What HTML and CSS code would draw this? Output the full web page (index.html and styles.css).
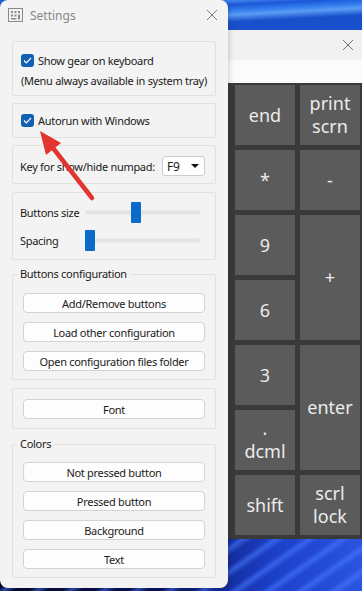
FILE: index.html
```html
<!DOCTYPE html>
<html lang="en">
<head>
    <meta charset="UTF-8">
    <meta name="viewport" content="width=device-width, initial-scale=1.0">
    <title>Settings</title>
    <link rel="stylesheet" href="styles.css">
</head>
<body>
    <div class="desktop">
        <div class="numpad-window">
            <div class="np-titlebar">
                <svg class="np-close" width="12" height="12" viewBox="0 0 12 12"><path d="M1 1L11 11M11 1L1 11" stroke="#707070" stroke-width="1"/></svg>
            </div>
            <div class="np-strip"></div>
            <div class="keypad">
                <div class="key">end</div>
                <div class="key">print<br>scrn</div>
                <div class="key">*</div>
                <div class="key">-</div>
                <div class="key">9</div>
                <div class="key tall">+</div>
                <div class="key">6</div>
                <div class="key">3</div>
                <div class="key tall">enter</div>
                <div class="key">.<br>dcml</div>
                <div class="key">shift</div>
                <div class="key">scrl<br>lock</div>
            </div>
        </div>

        <div class="settings-window">
            <div class="titlebar">
                <svg class="app-icon" width="15" height="14" viewBox="0 0 15 14">
                    <rect x="0.5" y="0.5" width="14" height="13" fill="none" stroke="#8a8a8a"/>
                    <rect x="3" y="3" width="2" height="2" fill="#8a8a8a"/>
                    <rect x="6.5" y="3" width="2" height="2" fill="#8a8a8a"/>
                    <rect x="10" y="3" width="2" height="2" fill="#8a8a8a"/>
                    <rect x="3" y="6.5" width="2" height="2" fill="#8a8a8a"/>
                    <rect x="6.5" y="6.5" width="2" height="2" fill="#8a8a8a"/>
                    <rect x="10" y="6.5" width="2" height="5" fill="#8a8a8a"/>
                    <rect x="3" y="10" width="5.5" height="1.5" fill="#8a8a8a"/>
                </svg>
                <span class="title">Settings</span>
                <svg class="close" width="12" height="12" viewBox="0 0 12 12"><path d="M1 1L11 11M11 1L1 11" stroke="#7a7a7a" stroke-width="1"/></svg>
            </div>

            <div class="content">
                <div class="box box-gear">
                    <label class="check-row"><span class="checkbox"><svg width="9" height="7" viewBox="0 0 9 7"><path d="M1 3.5L3.3 5.8L8 1" fill="none" stroke="#fff" stroke-width="1.2"/></svg></span>Show gear on keyboard</label>
                    <div class="note">(Menu always available in system tray)</div>
                </div>

                <div class="box box-autorun">
                    <label class="check-row"><span class="checkbox"><svg width="9" height="7" viewBox="0 0 9 7"><path d="M1 3.5L3.3 5.8L8 1" fill="none" stroke="#fff" stroke-width="1.2"/></svg></span>Autorun with Windows</label>
                </div>

                <div class="box box-key">
                    <span>Key for show/hide numpad:</span>
                    <div class="select"><span>F9</span><span class="caret"></span></div>
                </div>

                <div class="box box-sliders">
                    <div class="slider-row">
                        <span class="slider-label">Buttons size</span>
                        <div class="slider"><div class="track"></div><div class="thumb" style="left: 46px"></div></div>
                    </div>
                    <div class="slider-row">
                        <span class="slider-label">Spacing</span>
                        <div class="slider"><div class="track"></div><div class="thumb" style="left: 0px"></div></div>
                    </div>
                </div>

                <div class="group group-config">
                    <span class="group-title">Buttons configuration</span>
                    <button class="btn">Add/Remove buttons</button>
                    <button class="btn">Load other configuration</button>
                    <button class="btn">Open configuration files folder</button>
                </div>

                <div class="box box-font">
                    <button class="btn">Font</button>
                </div>

                <div class="group group-colors">
                    <span class="group-title">Colors</span>
                    <button class="btn">Not pressed button</button>
                    <button class="btn">Pressed button</button>
                    <button class="btn">Background</button>
                    <button class="btn">Text</button>
                </div>
            </div>
        </div>

        <svg class="arrow" width="362" height="591" viewBox="0 0 362 591">
            <line x1="53" y1="148" x2="92" y2="198" stroke="#e2352f" stroke-width="4.5" stroke-linecap="round"/>
            <polygon points="40,131 46,155 61,143" fill="#e2352f"/>
        </svg>
    </div>
</body>
</html>
```

FILE: styles.css
```css
body {
    margin: 0;
    font-family: 'Noto Sans', 'Open Sans', sans-serif;
    font-size: 11px;
    color: #1a1a1a;
}
.desktop {
    position: relative;
    width: 362px;
    height: 591px;
    overflow: hidden;
    background-color: #0c1f80;
    background-image:
        linear-gradient(177deg, #1d62e2 0, #2a74ee 6px, #4b95f6 11px, #1c58d6 17px, #2f78ec 22px, #5a9cf4 27px, #1850cc 34px),
        repeating-linear-gradient(145deg, rgba(40, 80, 230, 0) 0, rgba(40, 80, 230, 0) 8px, rgba(70, 120, 255, 0.6) 13px, rgba(40, 80, 230, 0) 19px),
        linear-gradient(95deg, #05082a 0, #0a1460 45%, #1c3fc8 75%, #2a55e0 100%);
    background-size: 100% 36px, 100% 60px, 100% 60px;
    background-position: top, bottom, bottom;
    background-repeat: no-repeat;
}

/* numpad window */
.numpad-window {
    position: absolute;
    left: 228px;
    top: 30px;
    width: 140px;
}
.np-titlebar {
    height: 30px;
    background-color: #f1f1f1;
    display: flex;
    align-items: center;
}
.np-close {
    margin-left: 114px;
}
.np-strip {
    height: 23px;
    background-color: #fbfbfb;
}
.keypad {
    background-color: #3a3a3a;
    padding: 2px 8px 4px 7px;
    display: grid;
    grid-template-columns: 60px 60px;
    grid-auto-rows: 60px;
    gap: 5px;
}
.key {
    background-color: #5b5b5b;
    color: #ececec;
    font-size: 18px;
    line-height: 23px;
    display: flex;
    align-items: center;
    justify-content: center;
    text-align: center;
}
.key.tall {
    grid-row: span 2;
}

/* settings window */
.settings-window {
    position: absolute;
    left: 0;
    top: 0;
    width: 228px;
    height: 588px;
    background-color: #f3f3f3;
    border-radius: 8px;
    box-shadow: 0 0 6px rgba(0, 0, 0, 0.25);
}
.titlebar {
    height: 30px;
    display: flex;
    align-items: center;
    padding-left: 8px;
}
.title {
    margin-left: 7px;
    color: #888;
    font-size: 12px;
}
.close {
    margin-left: auto;
    margin-right: 10px;
}
.content {
    padding: 11px 12px 0;
    letter-spacing: -0.3px;
    white-space: nowrap;
}
.box, .group {
    border: 1px solid #e1e1e1;
    border-radius: 2px;
}
.box-gear {
    height: 55px;
    box-sizing: border-box;
    padding: 11px 8px 0;
    margin-bottom: 7px;
}
.check-row {
    display: flex;
    align-items: center;
    gap: 4px;
    line-height: 15px;
}
.checkbox {
    width: 13px;
    height: 13px;
    border-radius: 3px;
    background-color: #1060b4;
    display: flex;
    align-items: center;
    justify-content: center;
}
.note {
    margin-top: 5px;
    line-height: 15px;
}
.box-autorun {
    height: 35px;
    box-sizing: border-box;
    padding: 0 8px;
    display: flex;
    align-items: center;
    margin-bottom: 7px;
}
.box-key {
    height: 39px;
    box-sizing: border-box;
    padding: 3px 10px 0 7px;
    display: flex;
    align-items: center;
    justify-content: space-between;
    margin-bottom: 8px;
}
.select {
    width: 43px;
    height: 20px;
    box-sizing: border-box;
    border: 1px solid #cdcdcd;
    border-radius: 3px;
    background-color: #fff;
    display: flex;
    align-items: center;
    justify-content: space-between;
    padding: 0 5px 0 4px;
    font-size: 12px;
}
.caret {
    width: 0;
    height: 0;
    border-left: 4px solid transparent;
    border-right: 4px solid transparent;
    border-top: 4px solid #111;
}
.box-sliders {
    height: 68px;
    box-sizing: border-box;
    padding: 9px 15px 0 7px;
    display: flex;
    flex-direction: column;
    gap: 7px;
}
.slider-row {
    display: flex;
    align-items: center;
    height: 21px;
}
.slider-label {
    width: 65px;
}
.slider {
    position: relative;
    flex: 1;
    height: 21px;
    display: flex;
    align-items: center;
}
.track {
    width: 100%;
    height: 3px;
    background-color: #e3e3e3;
    border: 1px solid #ececec;
}
.thumb {
    position: absolute;
    top: 0;
    width: 10px;
    height: 21px;
    background-color: #0a6cc8;
    border-radius: 1px;
}
.group {
    position: relative;
    display: flex;
    flex-direction: column;
    gap: 9px;
    padding: 18px 10px 8px;
}
.group-title {
    position: absolute;
    top: -9px;
    left: 4px;
    padding: 0 3px;
    background-color: #f3f3f3;
    font-size: 11px;
    line-height: 16px;
}
.group-config {
    margin-top: 14px;
}
.group-colors {
    margin-top: 15px;
    padding-top: 17px;
}
.btn {
    height: 20px;
    margin: 0;
    padding: 0;
    border: 1px solid #d3d3d3;
    border-radius: 4px;
    background-color: #fdfdfd;
    font-family: inherit;
    font-size: 11px;
    letter-spacing: -0.3px;
    color: #1a1a1a;
}
.box-font {
    margin-top: 8px;
    padding: 10px 10px 9px;
    display: flex;
    flex-direction: column;
}

.arrow {
    position: absolute;
    left: 0;
    top: 0;
    pointer-events: none;
}
```
